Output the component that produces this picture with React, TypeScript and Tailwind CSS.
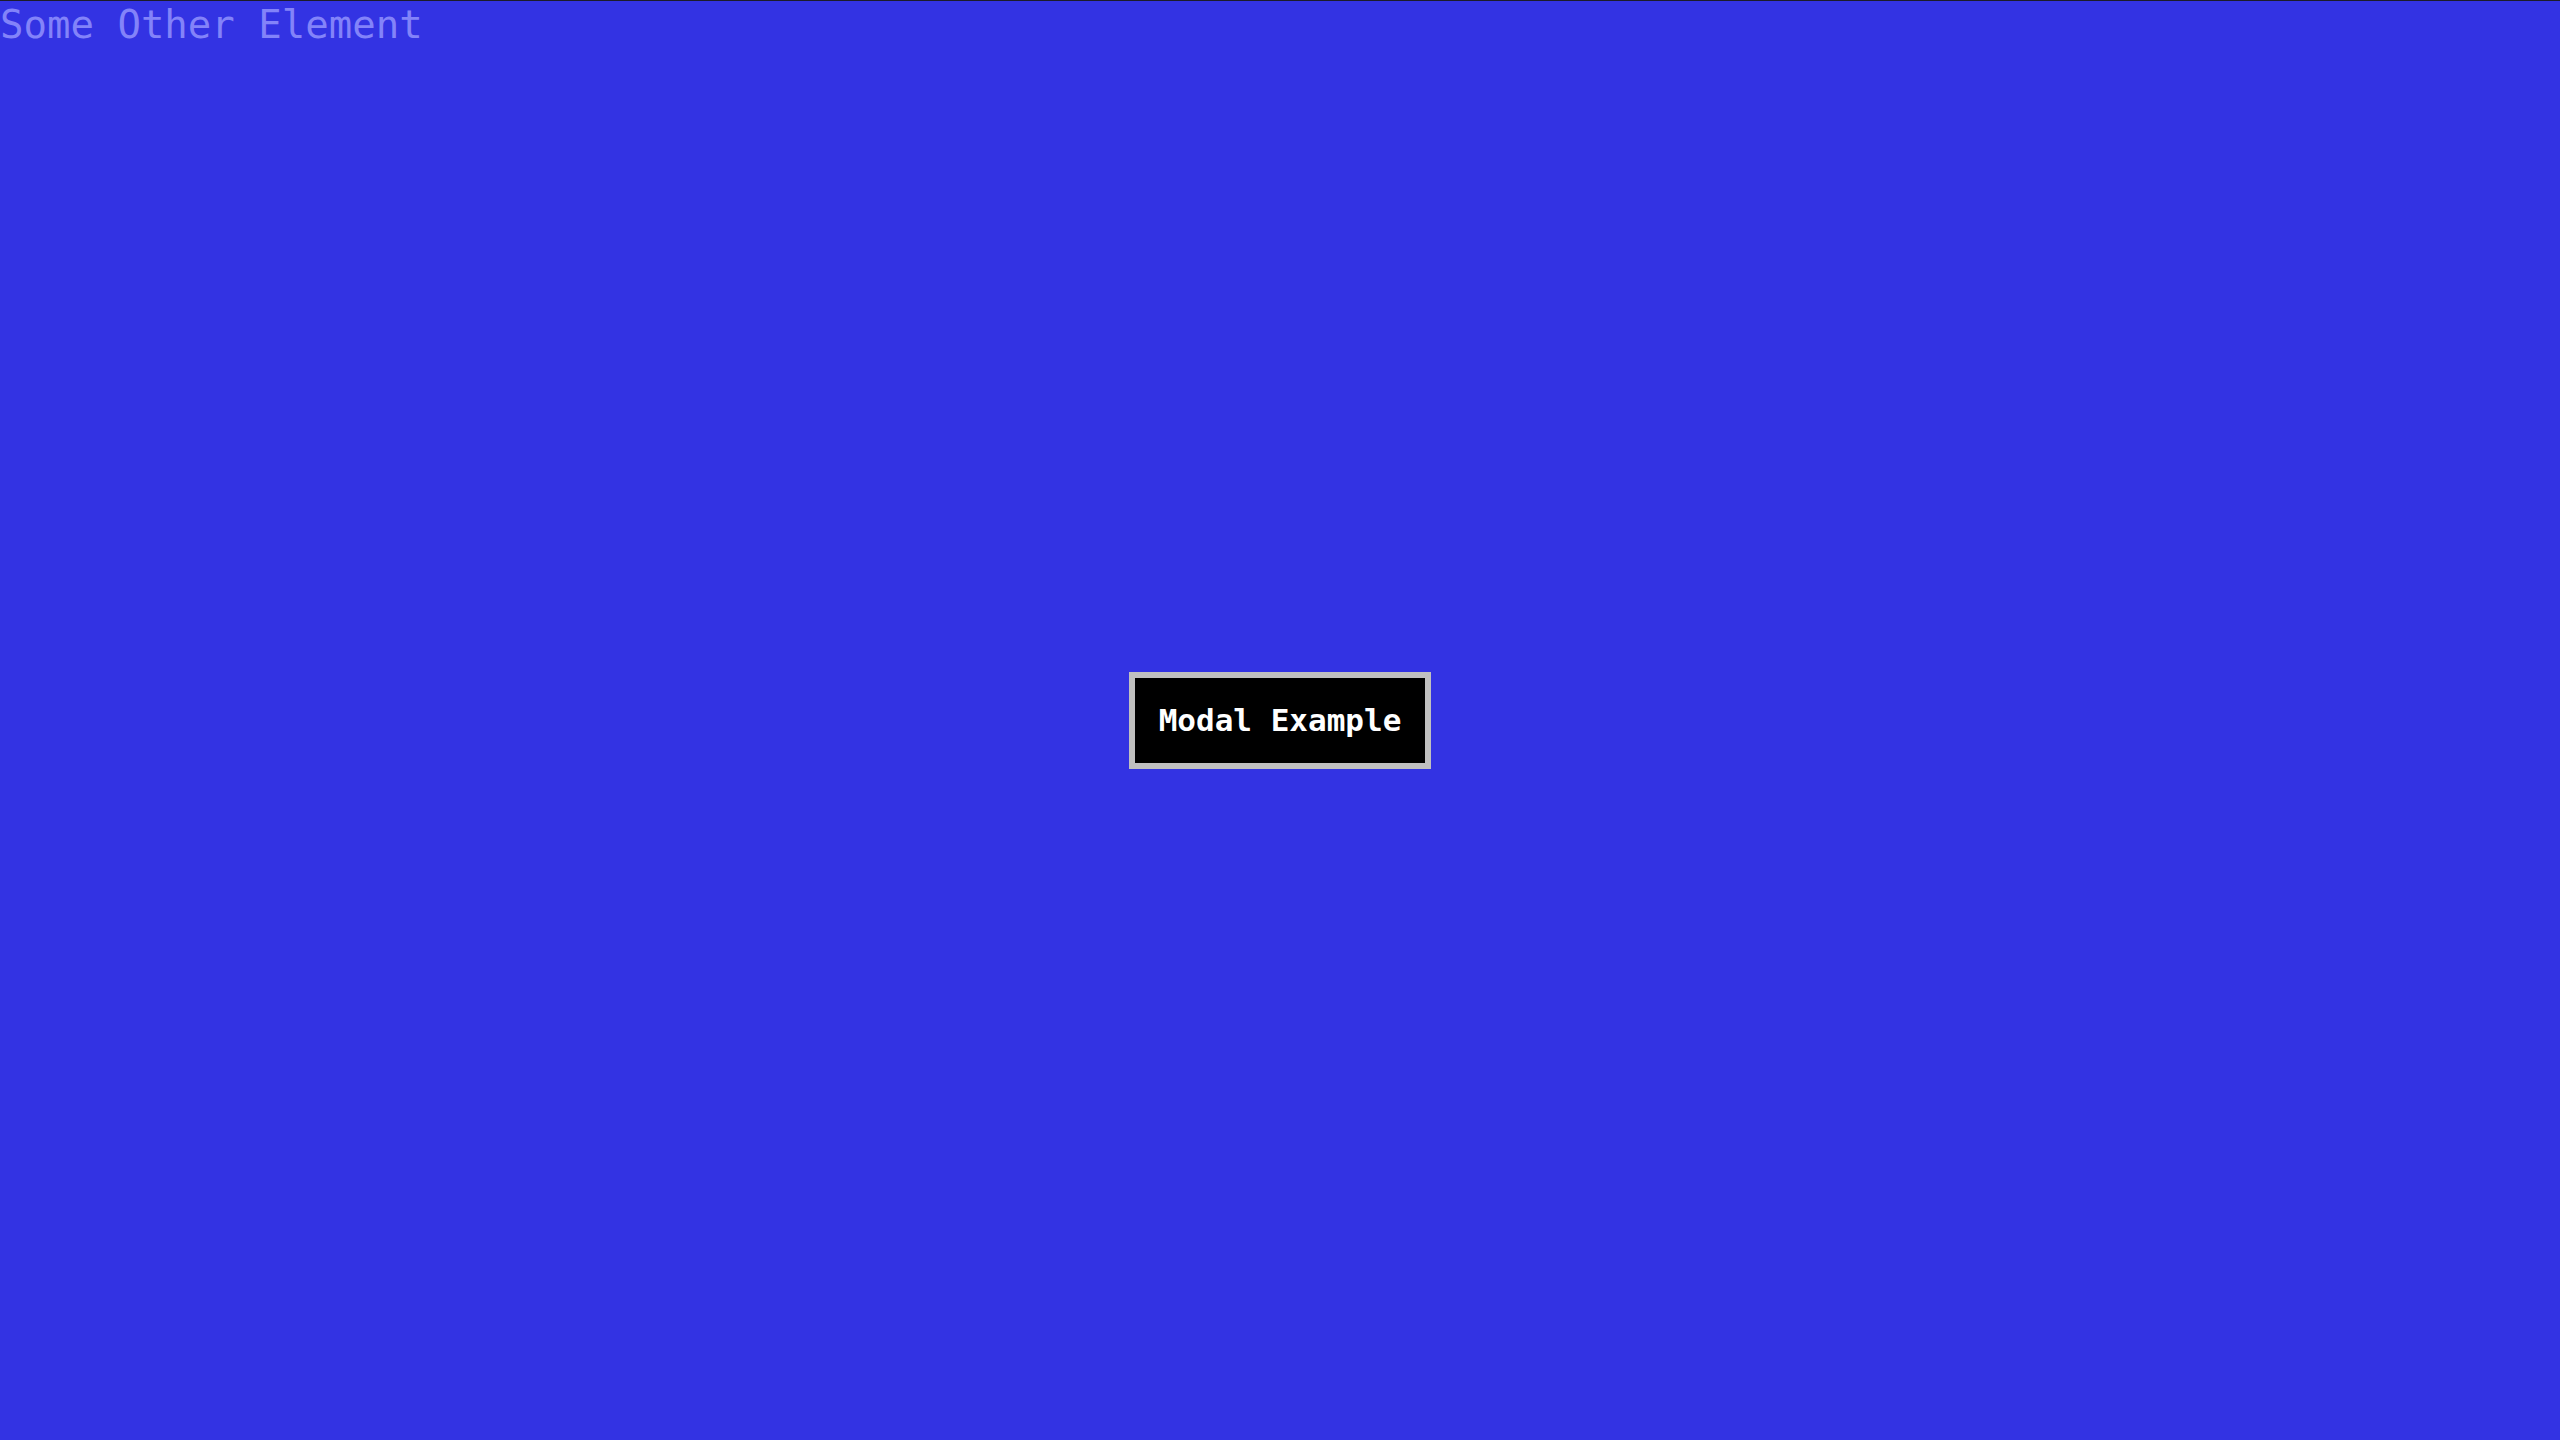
export default function App() {
  return (
    <div className="min-h-screen w-full bg-[#3333e3] border-t border-[#1c1c2a] font-['DejaVu_Sans_Mono',monospace]">
      <div className="pt-[1px] text-[39px] leading-[1.164] text-[#8383f9]">
        Some Other Element
      </div>
      <div className="fixed inset-0 flex items-center justify-center">
        <div className="w-[302px] h-[97px] border-[6px] border-[#c0c0c0] bg-black flex items-center justify-center">
          <span className="text-[31px] font-bold text-white">Modal Example</span>
        </div>
      </div>
    </div>
  );
}
